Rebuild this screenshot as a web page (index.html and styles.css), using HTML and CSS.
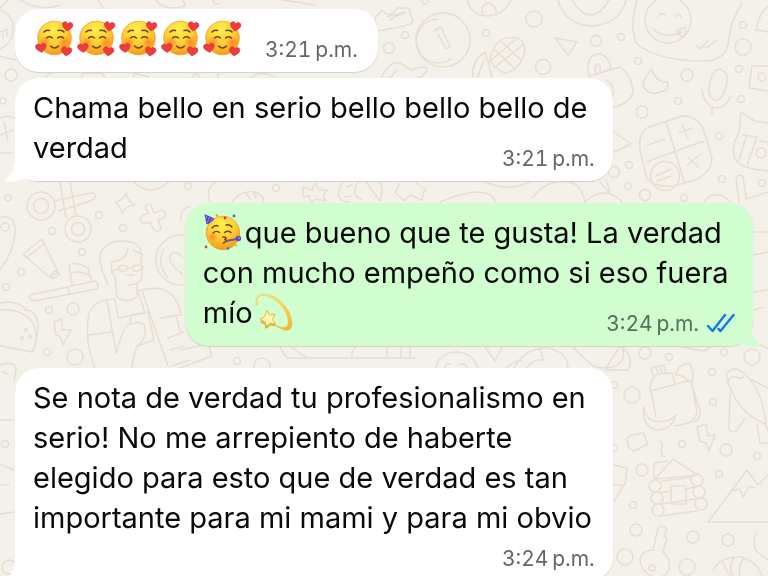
FILE: index.html
```html
<!DOCTYPE html>
<html lang="es">
<head>
<meta charset="utf-8">
<meta name="viewport" content="width=device-width, initial-scale=1">
<title>Chat</title>
<link rel="stylesheet" href="styles.css">
</head>
<body>
<svg class="defs" aria-hidden="true">
  <defs>
    <radialGradient id="skin" cx="0.45" cy="0.25" r="0.8">
      <stop offset="0" stop-color="#fff04d"/><stop offset="0.5" stop-color="#ffcf35"/><stop offset="1" stop-color="#f3911d"/>
    </radialGradient>
    <linearGradient id="trail" x1="0" y1="0" x2="1" y2="1">
      <stop offset="0" stop-color="#f9edaa"/><stop offset="0.6" stop-color="#f7cf4d"/><stop offset="1" stop-color="#efb52e"/>
    </linearGradient>
    <radialGradient id="blush"><stop offset="0" stop-color="#ff641e" stop-opacity=".6"/><stop offset="1" stop-color="#ff641e" stop-opacity="0"/></radialGradient>
    <path id="heart" d="M0 5C-3 3-5.500 1-5.300-1.500C-5-4-1.500-5 0-2.200C1.500-5 5-4 5.300-1.500C5.500 1 3 3 0 5Z"/>
    <symbol id="loved" viewBox="0 0 42 40">
      <circle cx="19.500" cy="19" r="16.800" fill="url(#skin)" stroke="#e99a20" stroke-width=".7"/>
      <circle cx="10" cy="23" r="6" fill="url(#blush)"/><circle cx="29" cy="23" r="6" fill="url(#blush)"/>
      <g fill="none" stroke="#704214" stroke-width="1.400" stroke-linecap="round">
        <path d="M9 13Q11 10.500 14.500 11.500M23 11.500Q27 10.500 29 13M11.500 19Q14.500 16.500 17.500 19M22.500 19Q25.500 16.500 28.500 19M15.500 27Q19.500 31 23.500 27"/>
      </g>
      <g fill="#ed3b3e" stroke="#cf2630" stroke-width=".5">
        <use href="#heart" transform="translate(32.500 7) rotate(8)"/>
        <use href="#heart" transform="translate(6 28.500) rotate(-8)"/>
        <use href="#heart" transform="translate(31.500 32) rotate(8)"/>
      </g>
    </symbol>
    <symbol id="party" viewBox="0 0 42 40">
      <circle cx="20" cy="20" r="16.700" fill="url(#skin)" stroke="#e99a20" stroke-width=".7"/>
      <circle cx="10" cy="24" r="5" fill="url(#blush)"/>
      <path d="M1.500 1L11.500 5.500Q9 10 3.500 11.500Z" fill="#5643b5"/>
      <path d="M4 2L3 6M7 3.500L4 10M10 5L7 10" stroke="#9b86e8" stroke-width="1"/>
      <g fill="none" stroke="#704214" stroke-width="1.400" stroke-linecap="round">
        <path d="M9 15Q12 11.500 15 13M23 12Q27 11 29 14M10 20Q13 17 16.500 19.500M21.500 19.500Q25 17 28 19.500M20 24Q25 24 22 26.500Q25 28 20.500 30"/>
      </g>
      <path d="M23 28L34 26" stroke="#6357ae" stroke-width="2"/>
      <circle cx="35.500" cy="25.500" r="2.700" fill="#5c4db2"/><circle cx="36" cy="25" r="1.200" fill="#8b7ae0"/>
      <circle cx="22" cy="5" r="1.400" fill="#e2392f"/><circle cx="31" cy="3" r="1.400" fill="#2f7fb5"/>
      <circle cx="3" cy="34" r="1.400" fill="#d9465c"/><circle cx="25" cy="35.500" r="1.300" fill="#2f86b5"/>
      <circle cx="14" cy="2.500" r="1.200" fill="#efa322"/><circle cx="33" cy="32.500" r="1" fill="#efa322"/><circle cx="4" cy="16" r="1" fill="#efa322"/>
    </symbol>
    <symbol id="dizzy" viewBox="0 0 42 40">
      <path d="M3.500 12C1 4 7-2 19 3C32 8 41 24 38.500 34C37 39 29 38 20 31C28 35 34 36 35 31C37 22 27 8 17 4C8 0 2 4 5 11Z" fill="url(#trail)" stroke="#eabd42" stroke-width=".5"/>
      <path d="M14 17.500L16.500 22L22 21L19.500 26.500L22.500 31L17 30L13 34L12 28.500L7 26.500L11.500 23.500Z" fill="#fff5b5" stroke="#efb52e" stroke-width="1" stroke-linejoin="round"/>
      <path d="M7.500 28.500L12.500 31L13 35L17.500 31.500L22 32.500" fill="none" stroke="#e8a72b" stroke-width="1.500" stroke-linejoin="round"/>
    </symbol>
    <symbol id="tail" viewBox="0 0 36 30">
      <path d="M12 0V4C12 15 8 24 0 28C8 30 16 28 21 25Q27 28 36 28V0Z"/>
    </symbol>
  </defs>
</svg>
<svg class="wallpaper" viewBox="0 0 768 576" preserveAspectRatio="xMinYMin slice" aria-hidden="true">
  <!-- left edge -->
  <path d="M0 10Q15 16 13 32Q11 44 0 49M0 32L8 29M3 33V38M7 31V36M0 56Q8 59 16 60M0 118Q10 114 18 120M4 122L8 140M0 135L13 130M0 153H12M0 8Q10 0 8-4M20 0Q42 12 60 5M98 0L104 9M156 0Q165 12 185 6L183 0M213 0Q214 6 220 3M282 0L315 5"/>
  <path d="M46 77L51 73M81 78L83 73H102L105 78M133 77L135 73L149 77M192 78L196 73L200 78M218 78V73M250 78Q263 69 276 78"/>
  <!-- scissors -->
  <circle cx="41" cy="206" r="14"/><circle cx="41" cy="206" r="7.500"/><circle cx="78" cy="229" r="13"/><circle cx="78" cy="229" r="6.500"/>
  <path d="M54 201L90 193Q97 193 95 198Q93 201 58 211M60 182L66 218M70 182L76 216M115 202Q123 201 126 193Q128 202 135 205Q125 206 122 213Q120 206 115 202Z"/>
  <path d="M151 205L154 213L162 210Q168 213 164 218L158 220L161 228Q158 234 153 229L150 222L143 224Q138 220 143 215L149 213L145 208Q146 202 151 205Z"/>
  <path d="M0 217Q14 215 15 228Q16 248 0 270"/><circle cx="5" cy="227" r="4"/><path d="M134 182Q150 198 169 182M181 221Q180 207 190 207"/>
  <!-- tube and brush -->
  <path d="M23 254L42 239L58 272L50 278ZM26 258L45 243M50 276L55 271L60 274L53 279ZM72 285L69 265Q75 261 88 268L92 282M71 273Q81 270 91 276M30 295L95 281Q100 284 97 289L34 301Q28 299 30 295M68 288L70 294"/>
  <!-- person -->
  <path d="M108 284Q96 260 102 250Q113 237 134 243Q144 250 141 260Q143 274 141 280Q137 285 128 285M128 248Q127 260 112 262Q110 274 115 276L117 297Q126 304 137 297V284M119 266Q125 264 128 268Q126 273 120 271ZM132 267Q138 263 143 267Q140 272 134 271ZM111 272L119 268M128 268H132M126 275L134 275M133 250L143 255"/>
  <path d="M114 299Q93 300 89 314Q84 340 95 368M107 300L116 353Q125 323 130 324L131 315L148 312L154 340L137 346M115 299L118 318L145 313L138 291M142 291L168 366M138 291Q175 280 181 315L160 318M88 335L112 332M130 324Q146 319 145 330Q147 338 137 346Q132 360 132 368M176 315L180 331M168 338L184 332M170 350L184 346M172 366L190 360"/>
  <circle cx="181" cy="260" r="25"/><path d="M182 274Q165 260 171 254Q177 250 182 257M164 249Q156 264 168 278"/>
  <!-- taco and bolt -->
  <path d="M0 303Q16 300 25 308M0 310Q22 308 33 323Q40 340 32 352L0 346M24 310Q36 309 38 325Q38 334 36 340M54 322L62 319L62 330L71 330L63 345L60 336L56 335ZM0 365Q15 360 16 370L14 382M2 372L8 374M0 420H14M0 485H9M0 464L14 470M0 514L14 512"/>
  <circle cx="22" cy="338" r="1.500"/><circle cx="26" cy="330" r="1.500"/><circle cx="30" cy="337" r="1.500"/>
  <!-- strips between bubbles -->
  <path d="M210 202Q205 190 215 182M232 202Q240 190 254 192Q264 195 264 202M246 193L250 199M253 192L256 198M303 187L312 190L315 183L319 190L327 190L323 196L326 201L316 199L311 203L309 196L303 197Z"/>
  <path d="M342 183Q332 202 350 202M346 187L352 185M345 197L351 196M358 182Q350 196 362 199M366 182L380 201Q384 188 380 182M400 183L395 193L405 201L410 195L422 200Q423 191 426 190L416 183M440 202Q488 182 496 202M485 182Q508 192 530 182M533 197Q550 176 575 184Q583 190 585 202M584 202Q606 184 622 202M600 182L612 196"/>
  <path d="M180 350L208 344L212 356L180 368M279 346L287 358H415M290 346L307 358M352 358Q351 350 357 346M387 346V358M401 346V358M410 346V358M436 368Q439 352 458 352Q474 354 478 368M445 368Q445 363 450 364M460 365Q466 362 467 369M485 347L495 361L502 347M506 368Q515 360 522 361M514 368Q525 347 548 348Q568 352 568 368M527 368Q533 358 545 360M540 348L543 360M572 346L586 360Q597 372 616 366Q628 358 621 346M606 368L620 346"/>
  <!-- top right -->
  <path d="M375 18L382 10Q390 20 397 8L409 8L413 22Q410 26 377 31ZM387 17L405 12M390 20Q396 15 405 13M467 0Q472 17 489 16Q505 14 511 0M484 16Q478 5 489 3Q497 6 496 14M558 0Q565 25 592 26Q620 24 626 0M572 0Q591 30 609 0"/>
  <circle cx="443" cy="40" r="27"/><path d="M451 59A22 22 0 1 1 438 19M434 31L441 27L450 47L446 49L438 34"/>
  <path d="M381 78Q390 60 400 63L411 70Q427 64 427 70Q425 76 416 78M390 78L397 70M473 78Q471 61 485 52Q490 66 492 78M477 78L484 60M490 58Q496 38 508 38Q525 35 525 52Q520 70 505 73Q491 67 490 58ZM495 50L515 69M502 42L521 60M494 68L524 44M490 61L515 40M555 38L577 42L568 55ZM589 76Q584 54 601 54Q610 58 611 69L600 73Q601 62 597 64Q594 66 596 75M590 76L620 67Q632 75 633 92Q630 103 614 107M606 80Q617 86 612 98"/>
  <path d="M637 0Q629 29 637 44Q660 62 707 61Q728 59 729 38Q731 20 742 4"/>
  <circle cx="668" cy="20" r="23"/><path d="M653 29Q665 40 682 32M658 17Q660 11 665 15M675 17Q679 11 681 17M677 31L685 27Q688 34 681 37ZM697 46L700 49L708 41M704 48L708 47L717 40M756 31Q759 13 768 6M757 30L768 32M652 69Q643 78 643 86Q651 99 667 89L668 82Q656 83 652 69ZM715 71Q708 80 709 93Q714 104 721 98Q728 88 727 75Q721 66 715 71M702 90Q704 105 715 108Q726 108 730 97M712 108V115M752 66H768M752 66L749 88L768 91"/><circle cx="762" cy="77" r="4"/>
  <!-- calculator -->
  <path d="M647 128L682 116Q700 116 705 134L712 158Q711 173 695 180L674 186Q648 188 645 172L640 150Q638 134 647 128ZM666 122L685 184M646 162L704 141M648 145L665 139M679 133L692 128M682 124L688 139M687 165L700 155M688 157L699 168M656 176L671 169M657 181L671 176"/><circle cx="665" cy="176" r="14.500"/>
  <!-- cat -->
  <path d="M739 133L741 112L755 121L768 123M739 132Q727 154 740 164Q750 170 768 171M742 135L757 137L747 165M746 137L739 160M760 141L768 142"/><circle cx="761" cy="153" r="5"/><path d="M736 178L739 202M743 176L746 198M736 178Q740 172 743 178M746 199L768 192M704 202Q715 187 731 202M614 132L631 144L614 152M606 180L610 192"/>
  <!-- rocket -->
  <path d="M754 232H768M754 255L768 252M754 292L768 290M754 310L764 307M760 345L768 348M729 371Q735 366 745 374Q763 391 766 424Q740 415 729 385Q724 375 729 371ZM728 384Q728 375 736 377Q743 380 743 376M752 380L768 388M730 393L729 430Q733 433 736 431L745 419M757 424L760 443H767M765 424L768 431"/>
  <!-- backpack -->
  <path d="M651 391L687 381Q691 380 692 384L697 412Q695 420 688 423L675 426M650 391Q650 377 658 374L672 373L675 384M653 375L651 368L664 365L666 373M656 367L658 373M660 366L662 373M675 374Q681 362 690 364Q695 372 692 383M675 375Q685 374 688 382M651 391L656 417M692 386L700 410Q701 420 693 422M644 406Q646 421 656 421Q670 423 676 415Q671 431 655 430Q641 424 644 406ZM697 427L706 424L708 436L715 435L709 451L706 443L700 441ZM627 438Q632 434 636 435Q644 430 645 437L648 444L634 451Q627 450 627 438ZM659 441Q665 444 661 449Q661 456 665 457"/>
  <!-- cabin -->
  <path d="M655 479L673 459L698 475M655 479L698 475M654 478V463L668 461M662 481L692 477M660 493L671 491M686 489L696 487M662 504L695 499M660 516L697 511"/>
  <rect x="671" y="486" width="15" height="18"/><circle cx="655" cy="486" r="6"/><circle cx="657" cy="498" r="6"/><circle cx="658" cy="510" r="6"/><circle cx="697" cy="480" r="6"/><circle cx="699" cy="492" r="6"/><circle cx="701" cy="504" r="6"/>
  <path d="M708 522L747 470L758 485L768 475M708 522H768M731 491L740 489L743 497L749 486L755 488M614 465L627 468L625 485H614M623 486L614 502"/>
  <path d="M653 550L658 528Q661 524 667 529L664 536L667 539L663 552Q671 559 669 569Q665 580 651 576Q637 567 641 556Q645 550 653 550ZM713 571Q720 556 740 557Q756 560 762 576M722 561L730 576M734 557Q728 568 733 576M744 558Q737 568 740 576M756 533Q751 544 758 553L768 560M614 346L621 345Q635 359 628 370L606 370M676 346L704 351L712 346"/>
  <circle cx="652" cy="568" r="3"/>
  <g>
    <circle cx="11" cy="75" r="6"/><circle cx="3" cy="101" r="3"/><circle cx="8" cy="198" r="3"/><circle cx="52" cy="231" r="3.500"/><circle cx="99" cy="215" r="3.500"/><circle cx="123" cy="228" r="3.500"/><circle cx="82" cy="252" r="3.500"/><circle cx="21" cy="272" r="3.500"/><circle cx="6" cy="287" r="3.500"/><circle cx="49" cy="310" r="3.500"/><circle cx="73" cy="309" r="6"/><circle cx="75" cy="357" r="8"/><circle cx="47" cy="352" r="3.500"/><circle cx="5" cy="444" r="3.500"/><circle cx="9" cy="567" r="7"/>
    <circle cx="188" cy="186" r="3.500"/><circle cx="276" cy="188" r="3.500"/><circle cx="237" cy="361" r="3.500"/><circle cx="262" cy="366" r="8"/>
    <circle cx="405" cy="35" r="3.500"/><circle cx="389" cy="48" r="5.500"/><circle cx="425" cy="1" r="3"/><circle cx="486" cy="33" r="3.500"/><circle cx="534" cy="19" r="8"/><circle cx="543" cy="67" r="7.500"/><circle cx="596" cy="41" r="5.500"/><circle cx="621" cy="37" r="3.500"/><circle cx="638" cy="61" r="3.500"/><circle cx="687" cy="75" r="6"/><circle cx="678" cy="101" r="3.500"/><circle cx="642" cy="112" r="6"/><circle cx="743" cy="25" r="3.500"/><circle cx="743" cy="47" r="8"/><circle cx="739" cy="69" r="3.500"/><circle cx="741" cy="99" r="3.500"/><circle cx="719" cy="136" r="3.500"/><circle cx="614" cy="172" r="5.500"/><circle cx="629" cy="165" r="3.500"/><circle cx="628" cy="186" r="3.500"/><circle cx="645" cy="195" r="5.500"/><circle cx="684" cy="198" r="3.500"/><circle cx="722" cy="179" r="3.500"/><circle cx="762" cy="183" r="3.500"/>
    <circle cx="645" cy="353" r="6"/><circle cx="669" cy="357" r="3.500"/><circle cx="724" cy="352" r="3.500"/><circle cx="752" cy="357" r="8"/><circle cx="632" cy="395" r="8"/><circle cx="712" cy="372" r="3.500"/><circle cx="713" cy="402" r="3.500"/><circle cx="682" cy="444" r="3.500"/><circle cx="726" cy="450" r="6"/><circle cx="757" cy="456" r="3.500"/><circle cx="642" cy="470" r="6"/><circle cx="719" cy="474" r="3.500"/><circle cx="633" cy="505" r="3.500"/><circle cx="636" cy="530" r="6"/><circle cx="693" cy="537" r="6"/><circle cx="728" cy="540" r="6"/><circle cx="625" cy="557" r="8"/><circle cx="687" cy="567" r="8"/><circle cx="614" cy="385" r="3.500"/><circle cx="614" cy="448" r="3.500"/>
  </g>
</svg>
<main class="chat">
  <section class="group">
    <article class="bubble bubble--in bubble--short">
      <p class="text"><svg class="emoji"><use href="#loved"/></svg><svg class="emoji"><use href="#loved"/></svg><svg class="emoji"><use href="#loved"/></svg><svg class="emoji"><use href="#loved"/></svg><svg class="emoji"><use href="#loved"/></svg></p>
      <span class="stamp"><time datetime="15:21">3:21&#8239;p.m.</time></span>
    </article>
    <article class="bubble bubble--in">
      <p class="text">Chama bello en serio bello bello bello de verdad <span class="stamp"><time datetime="15:21">3:21&#8239;p.m.</time></span></p>
      <svg class="tail"><use href="#tail"/></svg>
    </article>
  </section>
  <section class="group">
    <article class="bubble bubble--out">
      <p class="text"><svg class="emoji"><use href="#party"/></svg>que bueno que te gusta! La verdad con mucho empeño como si eso fuera mío<svg class="emoji"><use href="#dizzy"/></svg> <span class="stamp"><time datetime="15:24">3:24&#8239;p.m.</time><svg class="ticks" viewBox="0 0 28 20"><path d="M1 13L5.500 18L18 2M11.500 16L13.500 18L26.500 2"/></svg></span></p>
      <svg class="tail"><use href="#tail"/></svg>
    </article>
  </section>
  <section class="group">
    <article class="bubble bubble--in bubble--long">
      <p class="text">Se nota de verdad tu profesionalismo en serio! No me arrepiento de haberte elegido para esto que de verdad es tan importante para mi mami y para mi obvio</p>
      <span class="stamp"><time datetime="15:24">3:24&#8239;p.m.</time></span>
      <svg class="tail"><use href="#tail"/></svg>
    </article>
  </section>
</main>
</body>
</html>
```
FILE: styles.css
```css
* {
  box-sizing: border-box;
}

body {
  margin: 0;
  background: #f4f1ea;
  color: #0a0a0a;
  font-family: Inter, "Liberation Sans", sans-serif;
  font-size: 29px;
  line-height: 40px;
}

.defs {
  position: absolute;
  width: 0;
  height: 0;
}

.wallpaper {
  position: fixed;
  inset: 0;
  width: 100%;
  height: 100%;
  fill: none;
  stroke: #e9ddd2;
  stroke-width: 1.5;
  stroke-linecap: round;
  stroke-linejoin: round;
}

.chat {
  position: relative;
  display: flex;
  flex-direction: column;
  gap: 22px;
  height: 100vh;
  overflow: hidden;
  padding: 9px 15px 0;
}

.group {
  display: flex;
  flex-direction: column;
  flex-shrink: 0;
  gap: 6px;
}

.bubble {
  position: relative;
  isolation: isolate;
  display: flow-root;
  width: 81%;
  padding: 10px 18px 11px;
  border-radius: 24px;
  background: #fff;
  box-shadow: 0 1px 1px #d5d0c9;
}

.bubble--in {
  align-self: flex-start;
}

.bubble--out {
  align-self: flex-end;
  width: 77%;
  background: #d0fecf;
}

.bubble--short {
  display: flex;
  gap: 20px;
  width: fit-content;
  padding: 10px 20px 11px;
}

.text {
  display: flow-root;
  margin: 0;
}

.emoji {
  width: 42px;
  height: 40px;
  vertical-align: top;
}

.stamp {
  display: flex;
  float: right;
  gap: 8px;
  margin-top: 20px;
  color: #666;
  font-size: 21px;
  font-variant-numeric: tabular-nums;
  line-height: 22px;
}

.bubble--long .stamp {
  margin-top: 10px;
}

.bubble--out .stamp {
  color: #55705a;
}

.ticks {
  width: 28px;
  height: 20px;
  fill: none;
  stroke: #147ce5;
  stroke-width: 2.5;
  stroke-linecap: round;
  stroke-linejoin: round;
}

.tail {
  position: absolute;
  z-index: -1;
  bottom: -2px;
  left: -12px;
  width: 36px;
  height: 30px;
  fill: #fff;
}

.bubble--out .tail {
  right: -9px;
  left: auto;
  fill: #d0fecf;
  transform: scaleX(-1);
}
```
